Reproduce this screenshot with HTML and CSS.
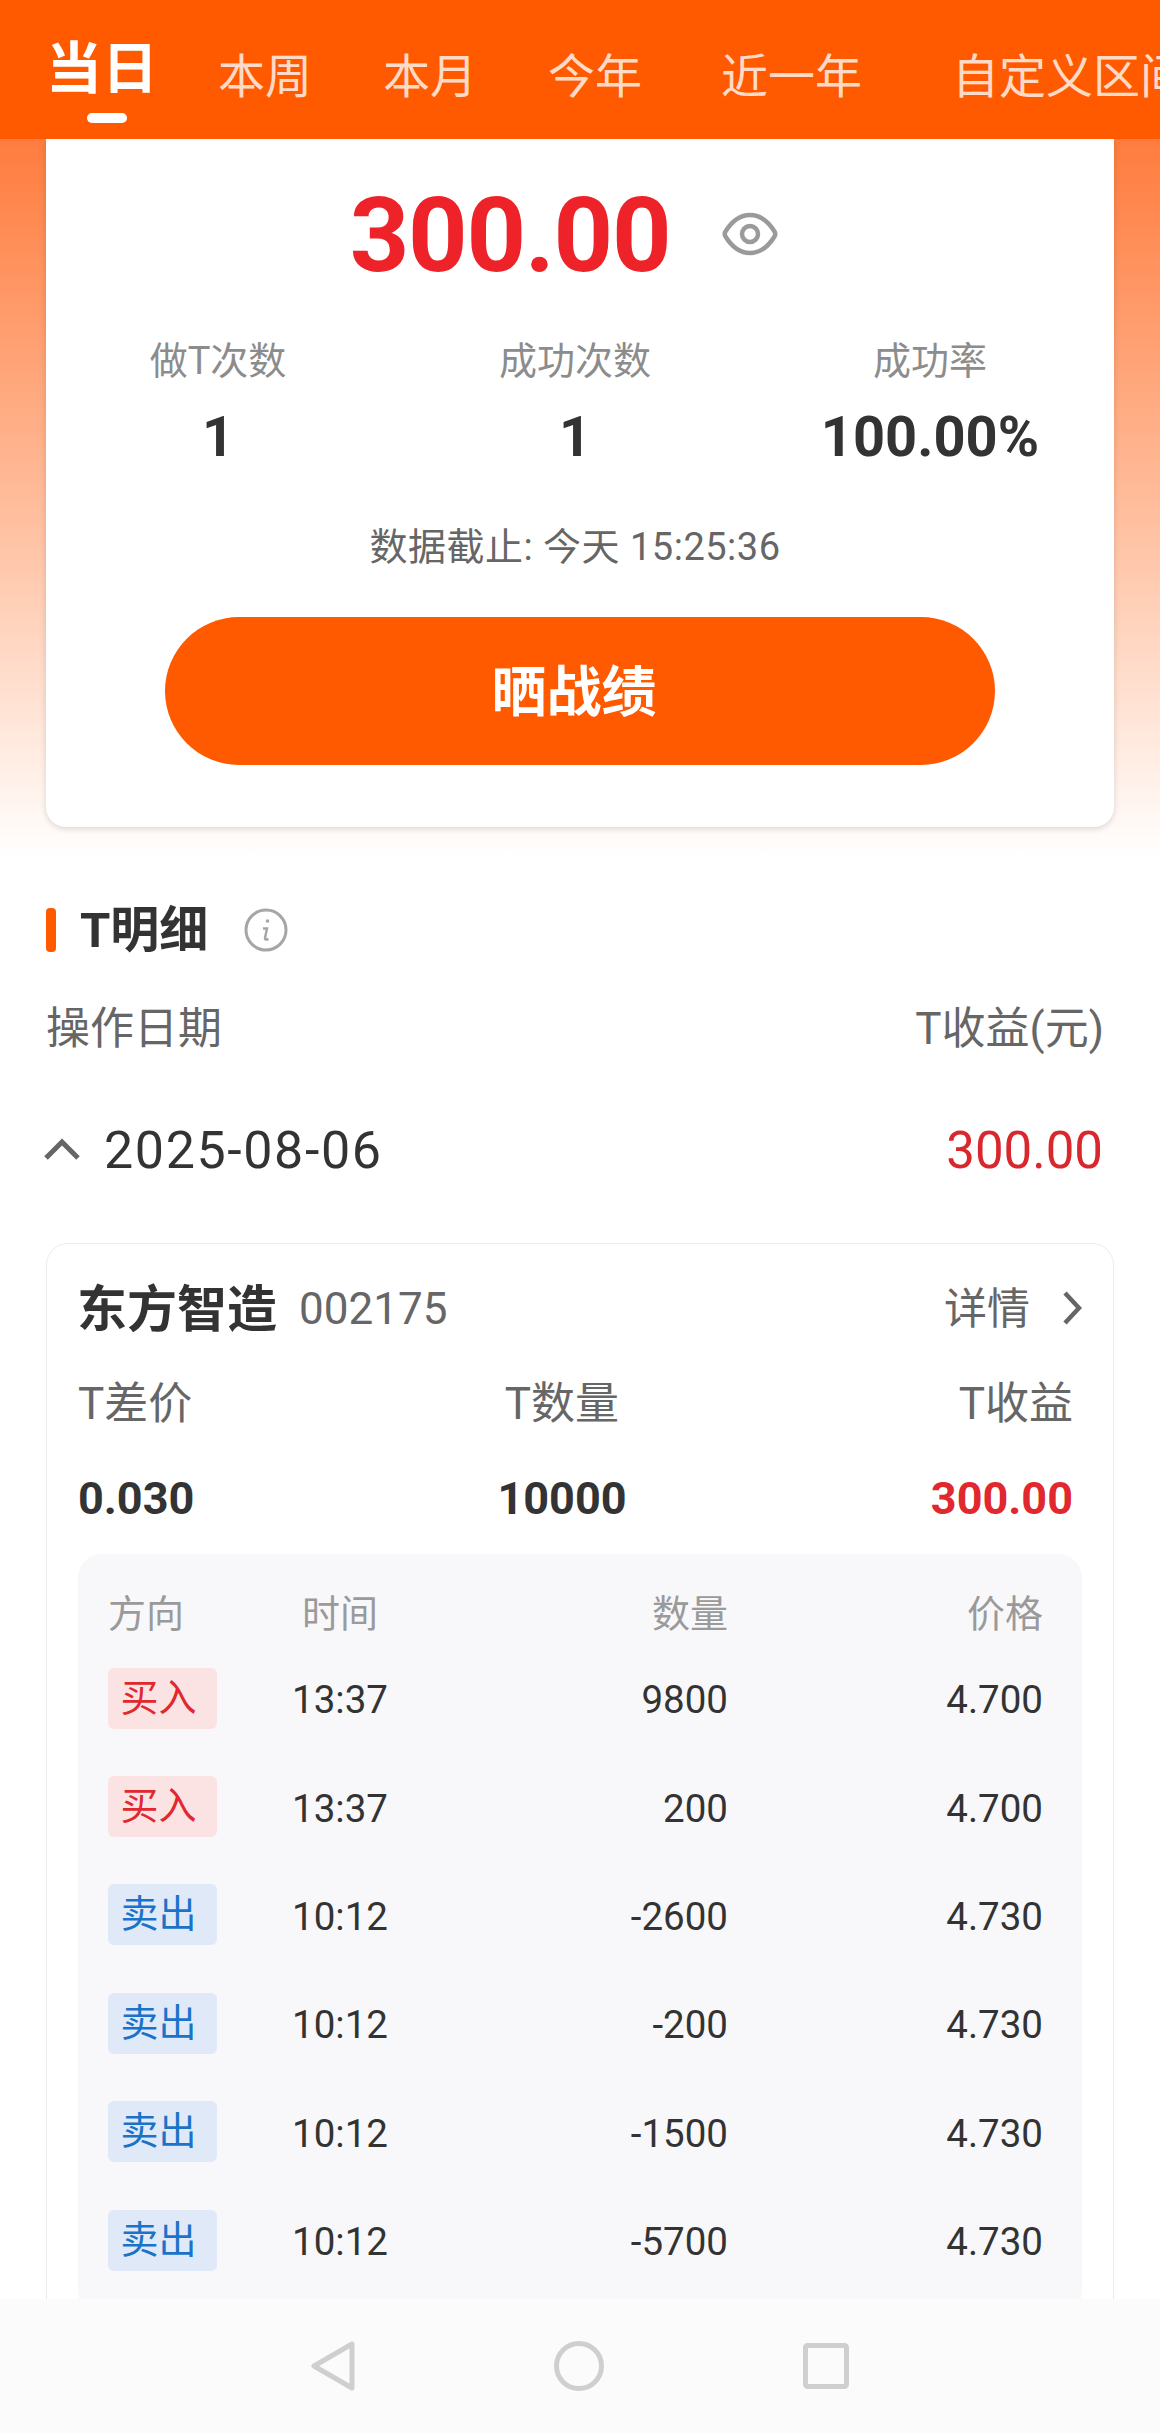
FILE: index.html
```html
<!DOCTYPE html>
<html lang="zh-CN">
<head>
<meta charset="utf-8">
<title>T收益</title>
<link rel="stylesheet" href="styles.css">
</head>
<body>
<div class="page">
  <header class="tabs">
    <span class="tab tab-active">当日</span>
    <span class="tab">本周</span>
    <span class="tab">本月</span>
    <span class="tab">今年</span>
    <span class="tab tab-near">近一年</span>
    <span class="tab tab-custom">自定义区间</span>
  </header>
  <main class="content">
    <section class="hero">
      <div class="summary">
        <div class="amount-row">
          <span class="amount">300.00</span>
          <svg class="eye" viewBox="0 0 56 44" fill="none" stroke="#9a9a9a" stroke-width="4.5">
            <path d="M3.5 19.5C10 9 18 3 28 3s18 6 24.500 16.500c1 1.600 1 3.400 0 5C46 35 38 41 28 41S10 35 3.500 24.500c-1-1.600-1-3.400 0-5z"/>
            <circle cx="28" cy="22" r="8"/>
          </svg>
        </div>
        <div class="stats">
          <div class="stat"><div class="stat-label">做T次数</div><div class="stat-value">1</div></div>
          <div class="stat"><div class="stat-label">成功次数</div><div class="stat-value">1</div></div>
          <div class="stat"><div class="stat-label">成功率</div><div class="stat-value">100.00%</div></div>
        </div>
        <div class="as-of">数据截止: 今天 15:25:36</div>
        <div class="share">晒战绩</div>
      </div>
    </section>
    <section class="detail">
      <div class="title-row">
        <span class="title-bar"></span>
        <span class="title">T明细</span>
        <svg class="info" viewBox="0 0 44 44" fill="none" stroke="#a6a6a6" stroke-width="3">
          <circle cx="22" cy="22" r="20"/>
          <path d="M19 20.500h4l-2 9.500c-.3 1.500.8 2 3.500 1" stroke-width="2.500"/>
          <circle cx="23.500" cy="13" r="1.800" fill="#a6a6a6" stroke="none"/>
        </svg>
      </div>
      <div class="col-head"><span>操作日期</span><span>T收益(元)</span></div>
      <div class="date-row">
        <svg class="chev-up" viewBox="0 0 36 22" fill="none" stroke="#666" stroke-width="5"><path d="M2 20L18 4l16 16"/></svg>
        <span class="date">2025-08-06</span>
        <span class="date-total">300.00</span>
      </div>
      <article class="stock">
        <div class="stock-head">
          <span class="stock-name">东方智造</span>
          <span class="stock-code">002175</span>
          <span class="stock-link">详情</span>
          <svg class="chev-right" viewBox="0 0 20 34" fill="none" stroke="#666" stroke-width="4.500"><path d="M3 2l14 15L3 32"/></svg>
        </div>
        <div class="metrics metric-labels">
          <span>T差价</span><span class="metric-mid">T数量</span><span class="metric-end">T收益</span>
        </div>
        <div class="metrics metric-values">
          <span>0.030</span><span class="metric-mid">10000</span><span class="metric-end up">300.00</span>
        </div>
        <div class="trades">
          <div class="trade trade-head"><span>方向</span><span class="t-time">时间</span><span class="t-num">数量</span><span class="t-num">价格</span></div>
          <div class="trade"><span class="badge buy">买入</span><span class="t-time">13:37</span><span class="t-num">9800</span><span class="t-num">4.700</span></div>
          <div class="trade"><span class="badge buy">买入</span><span class="t-time">13:37</span><span class="t-num">200</span><span class="t-num">4.700</span></div>
          <div class="trade"><span class="badge sell">卖出</span><span class="t-time">10:12</span><span class="t-num">-2600</span><span class="t-num">4.730</span></div>
          <div class="trade"><span class="badge sell">卖出</span><span class="t-time">10:12</span><span class="t-num">-200</span><span class="t-num">4.730</span></div>
          <div class="trade"><span class="badge sell">卖出</span><span class="t-time">10:12</span><span class="t-num">-1500</span><span class="t-num">4.730</span></div>
          <div class="trade"><span class="badge sell">卖出</span><span class="t-time">10:12</span><span class="t-num">-5700</span><span class="t-num">4.730</span></div>
        </div>
      </article>
    </section>
  </main>
  <nav class="sysnav">
    <svg class="nav-back" viewBox="0 0 44 50" fill="none" stroke="#cfcfcf" stroke-width="5" stroke-linejoin="round"><path d="M41 3v44L3 25z"/></svg>
    <svg class="nav-home" viewBox="0 0 50 50" fill="none" stroke="#cfcfcf" stroke-width="5"><circle cx="25" cy="25" r="22.500"/></svg>
    <svg class="nav-recent" viewBox="0 0 46 46" fill="none" stroke="#cfcfcf" stroke-width="5" stroke-linejoin="round"><rect x="2.500" y="2.500" width="41" height="41" rx="2"/></svg>
  </nav>
</div>
</body>
</html>
```

FILE: styles.css
```css
* { box-sizing: border-box; }
html, body { margin: 0; padding: 0; background: #fff; }
body { font-family: Roboto, "Noto Sans CJK SC", sans-serif; color: #333; }

.page {
  width: 1160px;
  height: 2433px;
  display: flex;
  flex-direction: column;
  overflow: hidden;
}

/* top tabs */
.tabs {
  flex: none;
  height: 139px;
  background: #ff5a00;
  display: flex;
  align-items: flex-start;
  gap: 71px;
  padding: 0 0 0 46px;
  white-space: nowrap;
  overflow: hidden;
}
.tab {
  flex: none;
  font-size: 47px;
  line-height: 60px;
  padding-top: 47px;
  color: rgba(255, 255, 255, 0.8);
}
.tab-active {
  position: relative;
  font-size: 56px;
  font-weight: 700;
  color: #fff;
  padding-top: 39px;
  margin-right: -11px;
}
.tab-active::after {
  content: "";
  position: absolute;
  left: 41px;
  top: 113px;
  width: 40px;
  height: 10px;
  border-radius: 5px;
  background: #fff;
}
.tab-near { margin-left: 8px; }
.tab-custom { margin-left: 19px; }

.content { flex: 1; min-height: 0; overflow: hidden; }

/* hero */
.hero {
  height: 716px;
  padding: 0 46px;
  background: linear-gradient(180deg, #ff7c3e 0%, #ffc2a3 55%, #fff 100%);
}
.summary {
  height: 688px;
  padding-top: 37px;
  background: #fff;
  border-radius: 0 0 20px 20px;
  box-shadow: 0 2px 6px rgba(0, 0, 0, 0.14);
}
.amount-row {
  display: flex;
  justify-content: center;
  align-items: center;
  gap: 52px;
  height: 120px;
  padding-right: 30px;
}
.amount {
  font-size: 104px;
  line-height: 120px;
  font-weight: 700;
  letter-spacing: -1.3px;
  color: #ee2229;
}
.eye { width: 56px; height: 44px; flex: none; margin: 0 2px 4px 0; }

.stats {
  display: grid;
  grid-template-columns: 344px 370px 340px;
  margin-top: 39px;
  text-align: center;
}
.stat-label { font-size: 38px; line-height: 50px; padding-top: 1px; height: 50px; color: #8c8c8c; }
.stat-value { font-size: 56px; line-height: 64px; font-weight: 700; margin-top: 20px; color: #333; }

.as-of {
  margin-top: 52px;
  padding: 1px 10px 0 0;
  height: 50px;
  text-align: center;
  font-size: 38px;
  line-height: 50px;
  letter-spacing: 0.5px;
  color: #666;
}
.share {
  height: 148px;
  margin: 46px 119px 0;
  padding: 3px 12px 0 0;
  border-radius: 74px;
  background: #ff5a00;
  color: #fff;
  font-size: 55px;
  font-weight: 700;
  line-height: 145px;
  text-align: center;
}

/* detail */
.detail { padding: 50px 46px 0; }
.title-row { display: flex; align-items: center; height: 50px; }
.title-bar { width: 10px; height: 44px; border-radius: 4px; background: #ff5a00; }
.title { margin-left: 24px; padding-top: 2px; font-size: 49px; line-height: 50px; font-weight: 700; color: #333; }
.info { width: 44px; height: 44px; margin-left: 36px; flex: none; }

.col-head {
  display: flex;
  justify-content: space-between;
  margin-top: 44px;
  padding-right: 10px;
  font-size: 44px;
  line-height: 60px;
  color: #666;
}
.date-row {
  display: flex;
  align-items: center;
  height: 70px;
  margin-top: 56px;
  padding-right: 11px;
}
.chev-up { width: 36px; height: 22px; flex: none; margin: 0 0 2px -2px; }
.date { margin-left: 24px; padding-top: 2px; font-size: 52px; line-height: 70px; letter-spacing: 1.6px; color: #333; }
.date-total { margin-left: auto; padding-top: 2px; font-size: 51px; line-height: 70px; color: #d9272e; }

.stock {
  height: 1100px;
  margin-top: 58px;
  padding: 34px 31px 0;
  background: #fff;
  border: 1px solid #ececec;
  border-radius: 22px;
}
.stock-head { display: flex; align-items: center; height: 60px; }
.stock-name { margin-left: -1px; padding-top: 3px; font-size: 50px; line-height: 60px; font-weight: 700; color: #333; }
.stock-code { margin-left: 22px; padding-top: 2px; font-size: 44px; line-height: 60px; color: #666; }
.stock-link { margin-left: auto; padding-top: 2px; font-size: 43px; line-height: 60px; color: #666; }
.chev-right { width: 20px; height: 34px; margin-left: 32px; flex: none; }

.metrics {
  display: grid;
  grid-template-columns: 1fr 1fr 1fr;
  line-height: 60px;
}
.metric-labels { margin-top: 36px; font-size: 44px; color: #666; }
.metric-values { margin-top: 35px; font-size: 45px; font-weight: 700; color: #333; }
.metric-mid { text-align: center; padding-right: 36px; }
.metric-end { text-align: right; margin-right: 9px; }
.up { color: #e0282e; }

.trades {
  height: 760px;
  margin-top: 25px;
  padding: 29px 40px 0 30px;
  background: #f8f8fb;
  border-radius: 24px;
}
.trade {
  display: grid;
  grid-template-columns: 184px 96px 340px 315px;
  align-items: center;
  height: 108.4px;
  font-size: 38.5px;
  color: #333;
}
.trade-head {
  height: 50px;
  margin-bottom: 11px;
  font-size: 38px;
  color: #9a9a9a;
}
.trade .t-time, .trade .t-num { padding-top: 3px; }
.trade-head .t-time, .trade-head .t-num { padding-top: 0; }
.t-time { text-align: center; white-space: nowrap; }
.t-num { text-align: right; }
.badge {
  width: 109px;
  height: 61px;
  padding-right: 8px;
  border-radius: 6px;
  font-size: 38px;
  line-height: 61px;
  text-align: center;
}
.buy { background: #fbe3e4; color: #e0282e; }
.sell { background: #dfe9f7; color: #1a73c8; }

/* system nav */
.sysnav {
  flex: none;
  height: 134px;
  background: #fbfbfb;
  display: flex;
  justify-content: center;
  align-items: center;
  gap: 199px;
}
.nav-back { width: 44px; height: 50px; flex: none; }
.nav-home { width: 50px; height: 50px; flex: none; }
.nav-recent { width: 46px; height: 46px; flex: none; }
```
